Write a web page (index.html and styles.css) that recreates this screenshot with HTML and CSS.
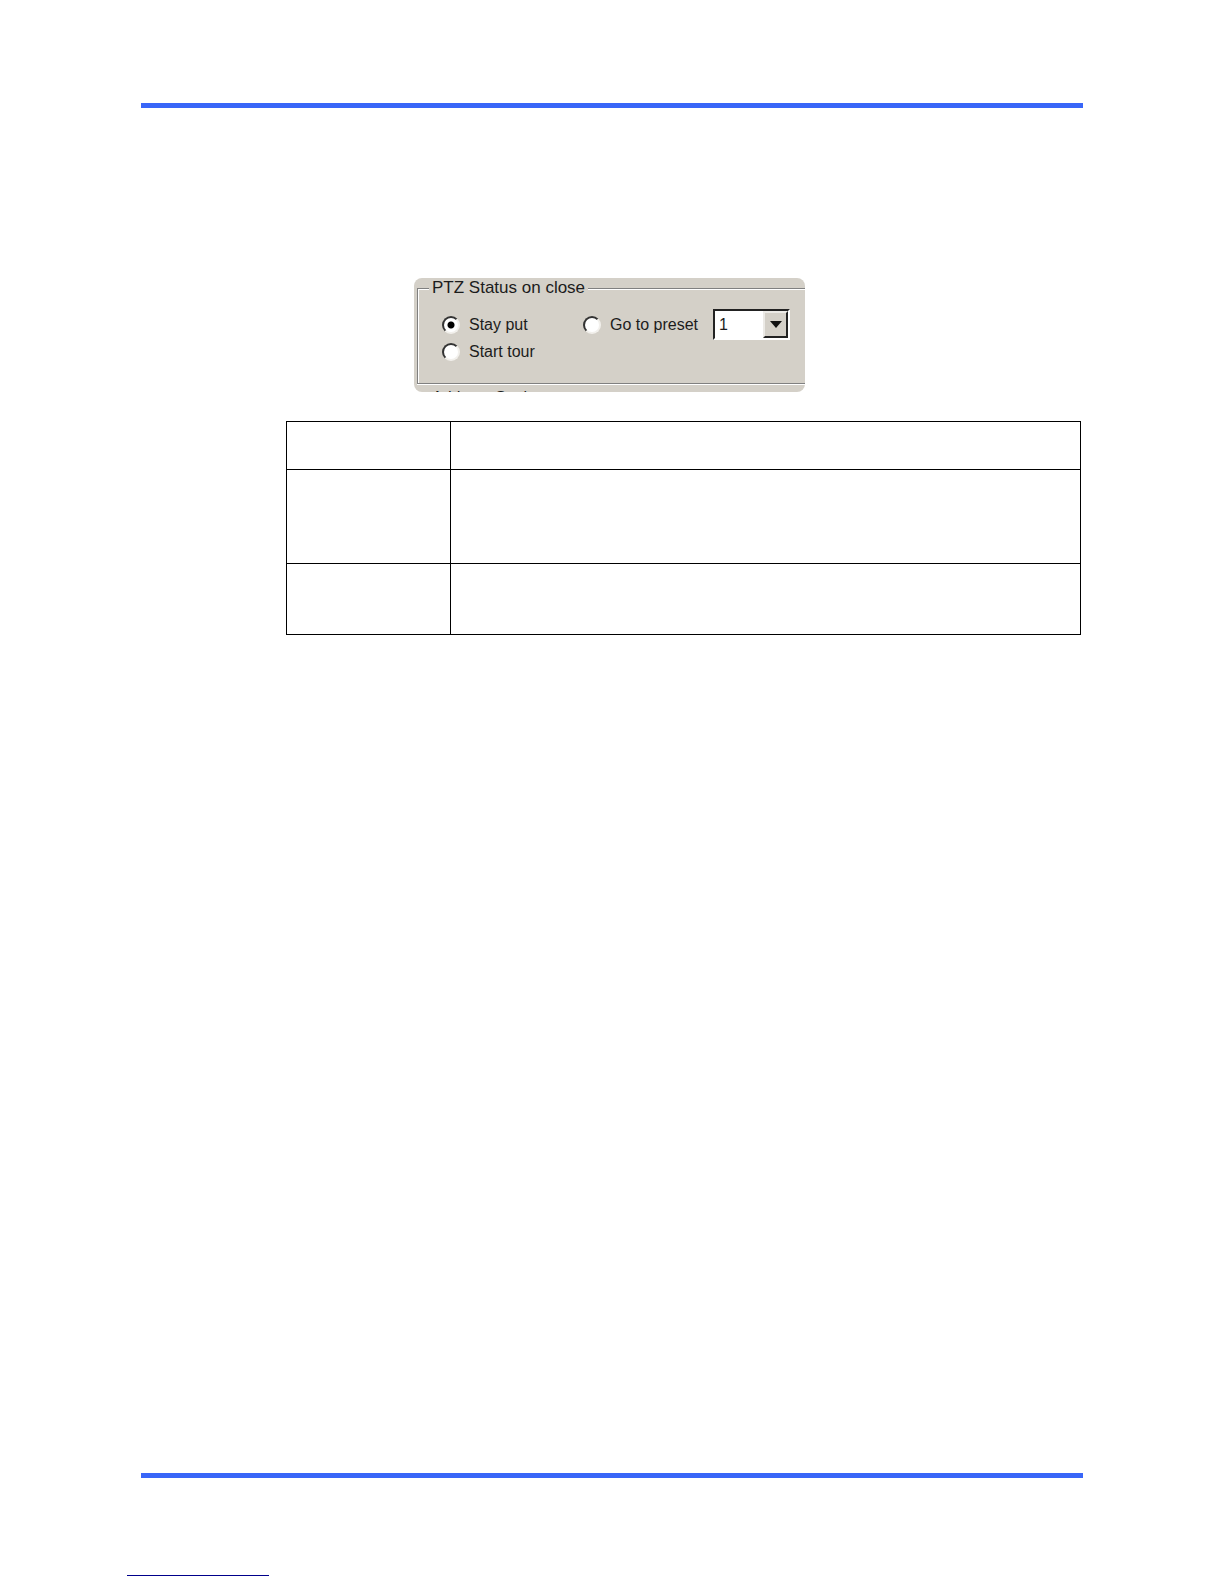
FILE: index.html
```html
<!DOCTYPE html>
<html lang="en">
<head>
    <meta charset="UTF-8">
    <meta name="viewport" content="width=device-width, initial-scale=1.0">
    <title>PTZ Status on close</title>
    <link rel="stylesheet" href="styles.css">
</head>
<body>
    <div class="page">
        <hr class="rule">

        <main class="content">
            <form class="panel">
                <fieldset class="group">
                    <legend>PTZ Status on close</legend>
                    <div class="options">
                        <label class="option"><input type="radio" name="status" value="stay" checked>Stay put</label>
                        <label class="option"><input type="radio" name="status" value="preset">Go to preset</label>
                        <div class="dropdown">
                            <select aria-label="Preset">
                                <option>1</option>
                                <option>2</option>
                                <option>3</option>
                            </select>
                            <span class="arrow">
                                <svg width="12" height="7" viewBox="0 0 12 7"><path d="M0 0h12L6 7z" fill="#111"/></svg>
                            </span>
                        </div>
                        <label class="option"><input type="radio" name="status" value="tour">Start tour</label>
                    </div>
                </fieldset>
                <div class="next-group">Address Settings</div>
            </form>

            <table class="grid">
                <tr class="row-small"><td class="name"></td><td></td></tr>
                <tr class="row-large"><td class="name"></td><td></td></tr>
                <tr class="row-medium"><td class="name"></td><td></td></tr>
            </table>
        </main>

        <footer>
            <hr class="rule">
            <hr class="link-line">
        </footer>
    </div>
</body>
</html>
```

FILE: styles.css
```css
* {
    box-sizing: border-box;
}
body {
    margin: 0;
    background: #fff;
    color: #1c1c1c;
    font-family: "Liberation Sans", Arial, sans-serif;
    font-size: 16px;
    line-height: 20px;
}
.page {
    display: flex;
    flex-direction: column;
    min-height: 100vh;
    padding: 103px 141px 8px;
}
.rule {
    width: 100%;
    height: 5px;
    margin: 0;
    border: none;
    background: #3966f8;
}
.content {
    padding: 170px 2px 0 145px;
}
.panel {
    width: 391px;
    max-width: 100%;
    height: 114px;
    margin-left: 128px;
    padding-left: 3px;
    overflow: hidden;
    border-radius: 8px;
    background: #d4d0c8;
}

/* etched frame, runs off the right side of the panel */
.group {
    margin: 0;
    padding: 11px 0 20px 11px;
    border: 1px solid #808080;
    border-right: none;
    box-shadow: inset 1px 1px 0 #fff, 0 1px 0 #fff;
}
legend {
    padding: 0 3px;
    background: #d4d0c8;
    font-size: 17px;
}
.options {
    display: grid;
    grid-template-columns: 141px 130px 77px;
    grid-template-rows: 31px 23px;
    align-items: center;
    padding-left: 13px;
}
.option {
    display: flex;
    align-items: center;
    gap: 9px;
}
.option input {
    appearance: none;
    width: 18px;
    height: 18px;
    margin: 0;
    border: 2px solid;
    border-color: #333 #f2f0ec #f2f0ec #333;
    border-radius: 50%;
    background: #fff;
}
.option input:checked {
    background: radial-gradient(circle, #000 3px, #fff 4px);
}
.dropdown {
    position: relative;
    height: 31px;
}
.dropdown select {
    appearance: none;
    width: 100%;
    height: 100%;
    padding: 0 4px;
    border: 2px solid;
    border-color: #222 #fff #fff #222;
    border-radius: 0;
    outline: 0;
    background: #fff;
    color: inherit;
    font: inherit;
}
.arrow {
    position: absolute;
    top: 2px;
    right: 2px;
    bottom: 2px;
    display: flex;
    align-items: center;
    justify-content: center;
    width: 25px;
    border: 2px solid;
    border-color: #eceae6 #222 #222 #eceae6;
    background: #d4d0c8;
    pointer-events: none;
}

/* only the tops of the letters show above the panel edge */
.next-group {
    padding: 4px 15px;
}

.grid {
    width: 100%;
    margin-top: 29px;
    border-collapse: collapse;
}
.grid td {
    padding: 0;
    border: 1px solid #000;
}
.grid .name {
    width: 164px;
}
.row-small {
    height: 48px;
}
.row-medium {
    height: 71px;
}
.row-large {
    height: 94px;
}

footer {
    margin-top: auto;
}
.link-line {
    width: 142px;
    height: 1px;
    margin: 97px 0 0 -14px;
    border: none;
    background: #00008b;
}
```
